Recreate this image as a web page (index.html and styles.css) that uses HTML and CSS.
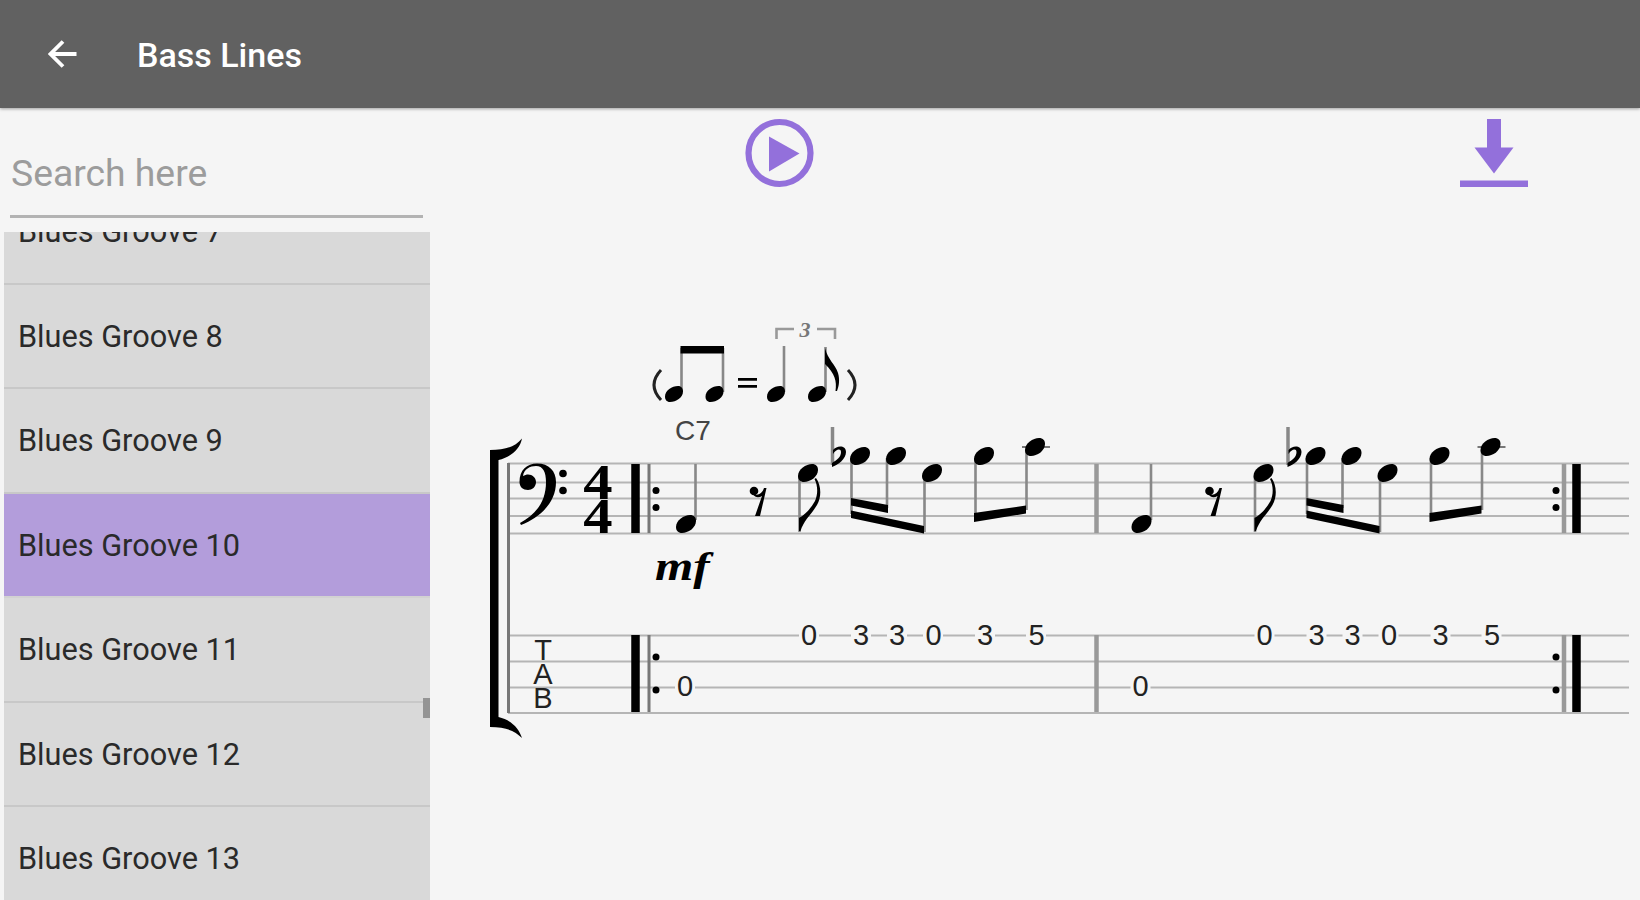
FILE: index.html
```html
<!DOCTYPE html>
<html lang="en">

<head>
    <meta charset="utf-8">
    <title>Bass Lines</title>
    <link rel="stylesheet" href="styles.css">
</head>

<body>
    <header class="topbar">
        <svg class="back" viewBox="0 0 30 28">
            <path d="M28.500 14H3M15 1.500L2.500 14L15 26.500" />
        </svg>
        <h1>Bass Lines</h1>
    </header>

    <div class="content">
        <aside class="sidebar">
            <input class="search" type="text" placeholder="Search here">
            <div class="listbox">
                <ul class="list">
                    <li>Blues Groove 7</li>
                    <li>Blues Groove 8</li>
                    <li>Blues Groove 9</li>
                    <li class="selected">Blues Groove 10</li>
                    <li>Blues Groove 11</li>
                    <li>Blues Groove 12</li>
                    <li>Blues Groove 13</li>
                </ul>
                <div class="thumb"></div>
            </div>
        </aside>

        <main class="main">
            <div class="toolbar">
                <svg class="icon" viewBox="0 0 70 70">
                    <circle cx="34.500" cy="35" r="31" fill="none" stroke="#9370db" stroke-width="6.200" />
                    <path d="M24 18.500V53.500L54.500 35.500Z" fill="#9370db" />
                </svg>
                <svg class="icon" viewBox="0 0 70 70">
                    <path d="M28 1H42V29.500H54.500L35 55.500L15.500 29.500H28ZM1 62.500H69V69H1Z" fill="#9370db" />
                </svg>
            </div>

            <svg class="score" viewBox="430 212 1210 688">
                <defs>
                    <path id="head" d="M-10 3C-10 -4 -2 -9 4 -9C8 -9 10 -6.500 10 -3C10 4 2 9 -4 9C-8 9 -10 6.500 -10 3Z" />
                    <path id="smallhead" d="M-9 2.500C-9 -3.500 -2 -8 4 -8C7.500 -8 9 -5.500 9 -2.500C9 3.500 2 8 -4 8C-7.500 8 -9 5.500 -9 2.500Z" />

                    <!-- notes and tab numbers of one measure -->
                    <g id="measure">
                        <path class="stem" d="M695.500 464V520M799.500 476V532M851.500 458V514M887 458V508M924.500 476V532M975.500 458V518M1026.500 450V510" />
                        <path class="ledger" d="M1022 447H1050" />
                        <use href="#head" x="686" y="524" />
                        <use href="#head" x="808" y="473" />
                        <use href="#head" x="860" y="456" />
                        <use href="#head" x="896" y="456" />
                        <use href="#head" x="932" y="473" />
                        <use href="#head" x="984" y="456" />
                        <use href="#head" x="1035" y="447" />
                        <!-- eighth rest -->
                        <circle cx="754" cy="491" r="4.300" />
                        <path d="M753 494C758 496 762 494 764 488L766.500 488L760 516H755L762 496C759 498 755 498 753 494Z" />
                        <!-- flag -->
                        <path d="M816 478C821 485 822 496 817 505C811 515 804 520 800.500 531L799 531V518C806 514 811 508 815 501C818 494 818 486 814.500 479Z" />
                        <!-- flat -->
                        <path class="stem flat" d="M832.500 427V465" />
                        <path d="M833 450C837 445 846 445 846 452C846 459 838 465 832 467V463C837 460 841 457 841 452C841 448 836 449 833 454Z" />
                        <!-- beams -->
                        <path d="M851 498L888 505V513L851 505.500ZM851 510.500L924 526V533.500L851 518ZM974 513L1026 505.500V513.500L974 522Z" />
                        <g class="gap">
                            <rect x="675" y="683" width="20" height="8" />
                            <rect x="799" y="631" width="20" height="8" />
                            <rect x="851" y="631" width="20" height="8" />
                            <rect x="887" y="631" width="20" height="8" />
                            <rect x="923" y="631" width="20" height="8" />
                            <rect x="975" y="631" width="20" height="8" />
                            <rect x="1026" y="631" width="20" height="8" />
                        </g>
                        <g class="fret">
                            <text x="685" y="696">0</text>
                            <text x="809" y="644.500">0</text>
                            <text x="861" y="644.500">3</text>
                            <text x="897" y="644.500">3</text>
                            <text x="933.500" y="644.500">0</text>
                            <text x="985" y="644.500">3</text>
                            <text x="1036.500" y="644.500">5</text>
                        </g>
                    </g>
                </defs>

                <!-- swing feel -->
                <path class="paren" d="M661 370Q647 385 661 400M848 370Q862 385 848 400" />
                <path class="stem" d="M681.500 348V392M723 348V392M784 346V392M825.500 347V392" />
                <path d="M680.500 346H724V353.500H680.500ZM738 378H757V380.700H738ZM738 385H757V387.700H738Z" />
                <use href="#smallhead" x="674" y="394" />
                <use href="#smallhead" x="714.500" y="394" />
                <use href="#smallhead" x="776" y="394" />
                <use href="#smallhead" x="817" y="394" />
                <path d="M825 348C828 360 835 364 838 373C840 380 839 386 837 391L835.500 391C837 381 835 374 825 364Z" />
                <path class="triplet" d="M776.500 339V329H794M817 329H835V339" />
                <text class="three" x="805" y="336.500">3</text>
                <text class="chord" x="693" y="440">C7</text>

                <!-- staff and tab lines -->
                <path class="line" d="M508 463.500H1629M508 482.500H1629M508 498.500H1629M508 516H1629M508 533.500H1629M508 635.500H1629M508 661.500H1629M508 687.500H1629M508 713H1629" />
                <path class="edge" d="M508.500 463V713" />
                <path d="M490 450C505 450 515 447 522 438.500C520 449 511 457 498.500 460V717C511 720 519 728 522 738C515 731 506 727 490 727Z" />

                <!-- bass clef -->
                <path d="M519.500 482C519.500 470 527 463.500 537 463.500C549 463.500 556 471 556 482C556 502 541 517 521 525L520 523C536 514 546 502 546 482C546 472 543 466 536 466C530 466 524 469 523 476C529 472 536 476 536 482C536 487 532 490 528 490C523 490 519.500 487 519.500 482Z" />
                <circle cx="563" cy="473.500" r="3.800" />
                <circle cx="563" cy="490.500" r="3.800" />
                <text class="time" transform="translate(598 498.500) scale(1.150 1)">4</text>
                <text class="time" transform="translate(598 532.800) scale(1.150 1)">4</text>
                <text class="dynamic" transform="translate(655 580) scale(1.200 1)">mf</text>

                <g class="tab">
                    <text x="543" y="659.500">T</text>
                    <text x="543" y="684">A</text>
                    <text x="543" y="708">B</text>
                </g>

                <use href="#measure" />
                <use href="#measure" x="455.500" />

                <!-- bar lines and repeats -->
                <path class="thick" d="M635.500 464V533M635.500 635V712M1576.500 464V533M1576.500 635V712" />
                <path class="thin" d="M649 464V533M649 635V712" />
                <path class="bar" d="M1096.500 464V533M1096.500 635V712M1564 464V533M1564 635V712" />
                <circle cx="656" cy="490.500" r="3.500" />
                <circle cx="656" cy="507.500" r="3.500" />
                <circle cx="656" cy="657" r="3.500" />
                <circle cx="656" cy="690" r="3.500" />
                <circle cx="1556" cy="490.500" r="3.500" />
                <circle cx="1556" cy="507.500" r="3.500" />
                <circle cx="1556" cy="657" r="3.500" />
                <circle cx="1556" cy="690" r="3.500" />
            </svg>
        </main>
    </div>
</body>

</html>
```

FILE: styles.css
```css
body {
    margin: 0;
    height: 900px;
    overflow: hidden;
    background: #f5f5f5;
    font-family: Roboto, sans-serif;
    display: flex;
    flex-direction: column;
}

.topbar {
    height: 108px;
    flex: none;
    box-sizing: border-box;
    padding: 0 0 0 48px;
    display: flex;
    align-items: center;
    gap: 59px;
    background: #616161;
    box-shadow: 0 1px 3px rgba(0, 0, 0, 0.35);
}

.back {
    width: 30px;
    height: 28px;
    fill: none;
    stroke: #fff;
    stroke-width: 3.8;
}

h1 {
    margin: 2px 0 0;
    font-size: 34px;
    font-weight: 500;
    color: #fff;
}

.content {
    flex: 1;
    min-height: 0;
    display: flex;
}

.sidebar {
    width: 426px;
    padding-left: 4px;
    display: flex;
    flex-direction: column;
}

.search {
    box-sizing: border-box;
    width: 413px;
    height: 88px;
    margin: 22px 0 14px 6px;
    padding: 0 0 0 1px;
    border: none;
    border-bottom: 3px solid #b3b3b3;
    background: none;
    font-family: Roboto, sans-serif;
    font-size: 37.3px;
}

.search::placeholder {
    color: #9c9c9c;
}

.listbox {
    position: relative;
    flex: 1;
    min-height: 0;
    overflow: hidden;
    background: #d9d9d9;
}

.list {
    list-style: none;
    margin: -52px 0 0;
    padding: 0;
}

.list li {
    box-sizing: border-box;
    height: 104.5px;
    padding-left: 14px;
    line-height: 104px;
    font-size: 30.7px;
    color: #2a2a2a;
    border-bottom: 2px solid #c8c8c8;
}

.list .selected {
    background: #b39ddb;
    background-clip: padding-box;
    border-color: #d2d2d2;
}

.thumb {
    position: absolute;
    right: 0;
    top: 466px;
    width: 7px;
    height: 20px;
    background: #949494;
}

.main {
    flex: 1;
    display: flex;
    flex-direction: column;
}

.toolbar {
    height: 104px;
    box-sizing: border-box;
    padding: 10px 111px 0 315px;
    display: flex;
    justify-content: space-between;
}

.icon {
    width: 70px;
    height: 70px;
}

.score {
    width: 1210px;
    height: 688px;
    font-family: "Liberation Sans", sans-serif;
}

.line {
    stroke: #b5b5b5;
    stroke-width: 2.2;
}

.edge,
.thin {
    stroke: #777;
    stroke-width: 3;
}

.bar {
    stroke: #999;
    stroke-width: 4.5;
}

.thick {
    stroke: #000;
    stroke-width: 8.5;
}

.stem {
    stroke: #888;
    stroke-width: 2.6;
}

.flat {
    stroke-width: 3.5;
}

.ledger {
    stroke: #777;
    stroke-width: 2;
}

.paren {
    fill: none;
    stroke: #222;
    stroke-width: 3;
}

.triplet {
    fill: none;
    stroke: #999;
    stroke-width: 2.6;
}

.gap {
    fill: #f5f5f5;
}

.fret,
.tab,
.chord {
    font-size: 29px;
    text-anchor: middle;
    fill: #222;
}

.chord {
    font-size: 28px;
    fill: #444;
}

.three {
    font: italic bold 22px "Liberation Serif", serif;
    text-anchor: middle;
    fill: #777;
}

.time {
    font: bold 51px "Liberation Serif", serif;
    text-anchor: middle;
}

.dynamic {
    font: italic bold 41px "Liberation Serif", serif;
}
```
